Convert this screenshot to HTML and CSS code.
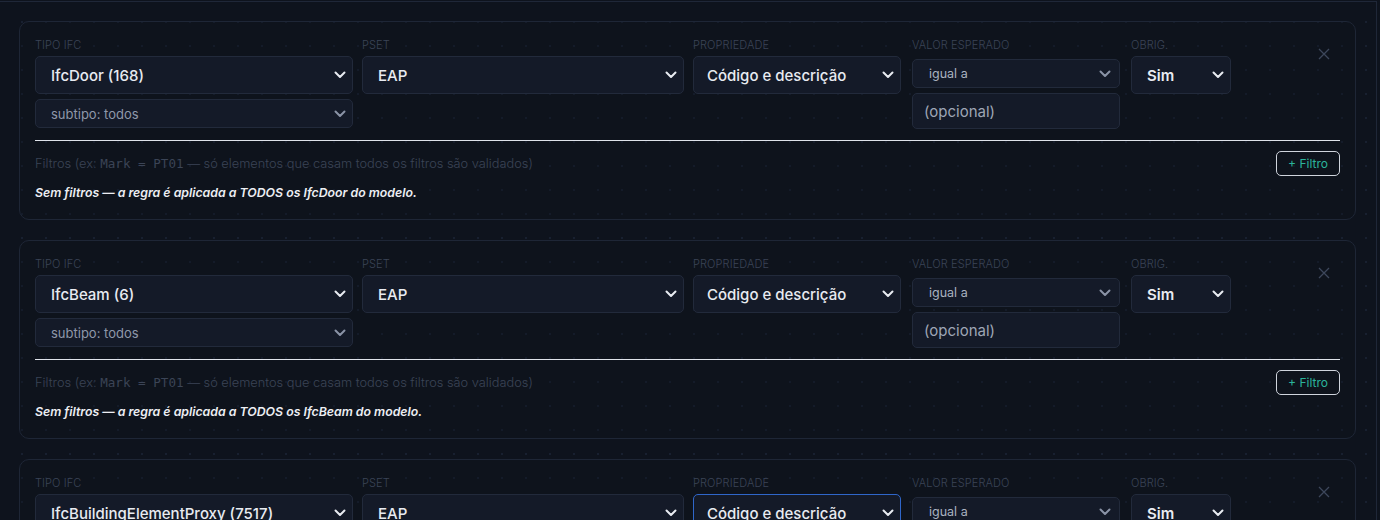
FILE: index.html
```html
<!DOCTYPE html>
<html lang="pt-BR">
<head>
<meta charset="utf-8">
<title>Regras IFC</title>
<link rel="stylesheet" href="styles.css">
</head>
<body>
<div class="panel">

  <div class="rule-card">
    <div class="rule-grid">
      <div class="field">
        <span class="lbl">Tipo IFC</span>
        <div class="sel sel-lg"><span>IfcDoor (168)</span><svg class="chev" width="12" height="8" viewBox="0 0 12 8"><path d="M1.5 1.5 6 6l4.5-4.5" fill="none" stroke="currentColor" stroke-width="2" stroke-linecap="round" stroke-linejoin="round"/></svg></div>
        <div class="sel sel-sm"><span>subtipo: todos</span><svg class="chev" width="12" height="8" viewBox="0 0 12 8"><path d="M1.5 1.5 6 6l4.5-4.5" fill="none" stroke="currentColor" stroke-width="2" stroke-linecap="round" stroke-linejoin="round"/></svg></div>
      </div>
      <div class="field">
        <span class="lbl">Pset</span>
        <div class="sel sel-lg"><span>EAP</span><svg class="chev" width="12" height="8" viewBox="0 0 12 8"><path d="M1.5 1.5 6 6l4.5-4.5" fill="none" stroke="currentColor" stroke-width="2" stroke-linecap="round" stroke-linejoin="round"/></svg></div>
      </div>
      <div class="field">
        <span class="lbl">Propriedade</span>
        <div class="sel sel-lg sel-prop"><span>Código e descrição</span><svg class="chev" width="12" height="8" viewBox="0 0 12 8"><path d="M1.5 1.5 6 6l4.5-4.5" fill="none" stroke="currentColor" stroke-width="2" stroke-linecap="round" stroke-linejoin="round"/></svg></div>
      </div>
      <div class="field">
        <span class="lbl">Valor esperado</span>
        <div class="sel sel-op"><span>igual a</span><svg class="chev" width="12" height="8" viewBox="0 0 12 8"><path d="M1.5 1.5 6 6l4.5-4.5" fill="none" stroke="currentColor" stroke-width="2" stroke-linecap="round" stroke-linejoin="round"/></svg></div>
        <div class="inp">(opcional)</div>
      </div>
      <div class="field">
        <span class="lbl">Obrig.</span>
        <div class="sel sel-lg sel-bold"><span>Sim</span><svg class="chev" width="12" height="8" viewBox="0 0 12 8"><path d="M1.5 1.5 6 6l4.5-4.5" fill="none" stroke="currentColor" stroke-width="2" stroke-linecap="round" stroke-linejoin="round"/></svg></div>
      </div>
      <button class="remove" aria-label="Remover"><svg width="12" height="12" viewBox="0 0 12 12"><path d="M1 1l10 10M11 1 1 11" fill="none" stroke="currentColor" stroke-width="1.3"/></svg></button>
    </div>
    <hr class="divider">
    <div class="filters-head">
      <span class="hint">Filtros (ex: <code>Mark = PT01</code> — só elementos que casam todos os filtros são validados)</span>
      <button class="add-filter">+ Filtro</button>
    </div>
    <p class="no-filters">Sem filtros — a regra é aplicada a TODOS os IfcDoor do modelo.</p>
  </div>

  <div class="rule-card">
    <div class="rule-grid">
      <div class="field">
        <span class="lbl">Tipo IFC</span>
        <div class="sel sel-lg"><span>IfcBeam (6)</span><svg class="chev" width="12" height="8" viewBox="0 0 12 8"><path d="M1.5 1.5 6 6l4.5-4.5" fill="none" stroke="currentColor" stroke-width="2" stroke-linecap="round" stroke-linejoin="round"/></svg></div>
        <div class="sel sel-sm"><span>subtipo: todos</span><svg class="chev" width="12" height="8" viewBox="0 0 12 8"><path d="M1.5 1.5 6 6l4.5-4.5" fill="none" stroke="currentColor" stroke-width="2" stroke-linecap="round" stroke-linejoin="round"/></svg></div>
      </div>
      <div class="field">
        <span class="lbl">Pset</span>
        <div class="sel sel-lg"><span>EAP</span><svg class="chev" width="12" height="8" viewBox="0 0 12 8"><path d="M1.5 1.5 6 6l4.5-4.5" fill="none" stroke="currentColor" stroke-width="2" stroke-linecap="round" stroke-linejoin="round"/></svg></div>
      </div>
      <div class="field">
        <span class="lbl">Propriedade</span>
        <div class="sel sel-lg sel-prop"><span>Código e descrição</span><svg class="chev" width="12" height="8" viewBox="0 0 12 8"><path d="M1.5 1.5 6 6l4.5-4.5" fill="none" stroke="currentColor" stroke-width="2" stroke-linecap="round" stroke-linejoin="round"/></svg></div>
      </div>
      <div class="field">
        <span class="lbl">Valor esperado</span>
        <div class="sel sel-op"><span>igual a</span><svg class="chev" width="12" height="8" viewBox="0 0 12 8"><path d="M1.5 1.5 6 6l4.5-4.5" fill="none" stroke="currentColor" stroke-width="2" stroke-linecap="round" stroke-linejoin="round"/></svg></div>
        <div class="inp">(opcional)</div>
      </div>
      <div class="field">
        <span class="lbl">Obrig.</span>
        <div class="sel sel-lg sel-bold"><span>Sim</span><svg class="chev" width="12" height="8" viewBox="0 0 12 8"><path d="M1.5 1.5 6 6l4.5-4.5" fill="none" stroke="currentColor" stroke-width="2" stroke-linecap="round" stroke-linejoin="round"/></svg></div>
      </div>
      <button class="remove" aria-label="Remover"><svg width="12" height="12" viewBox="0 0 12 12"><path d="M1 1l10 10M11 1 1 11" fill="none" stroke="currentColor" stroke-width="1.3"/></svg></button>
    </div>
    <hr class="divider">
    <div class="filters-head">
      <span class="hint">Filtros (ex: <code>Mark = PT01</code> — só elementos que casam todos os filtros são validados)</span>
      <button class="add-filter">+ Filtro</button>
    </div>
    <p class="no-filters">Sem filtros — a regra é aplicada a TODOS os IfcBeam do modelo.</p>
  </div>

  <div class="rule-card">
    <div class="rule-grid">
      <div class="field">
        <span class="lbl">Tipo IFC</span>
        <div class="sel sel-lg"><span>IfcBuildingElementProxy (7517)</span><svg class="chev" width="12" height="8" viewBox="0 0 12 8"><path d="M1.5 1.5 6 6l4.5-4.5" fill="none" stroke="currentColor" stroke-width="2" stroke-linecap="round" stroke-linejoin="round"/></svg></div>
        <div class="sel sel-sm"><span>subtipo: todos</span><svg class="chev" width="12" height="8" viewBox="0 0 12 8"><path d="M1.5 1.5 6 6l4.5-4.5" fill="none" stroke="currentColor" stroke-width="2" stroke-linecap="round" stroke-linejoin="round"/></svg></div>
      </div>
      <div class="field">
        <span class="lbl">Pset</span>
        <div class="sel sel-lg"><span>EAP</span><svg class="chev" width="12" height="8" viewBox="0 0 12 8"><path d="M1.5 1.5 6 6l4.5-4.5" fill="none" stroke="currentColor" stroke-width="2" stroke-linecap="round" stroke-linejoin="round"/></svg></div>
      </div>
      <div class="field">
        <span class="lbl">Propriedade</span>
        <div class="sel sel-lg sel-prop is-focused"><span>Código e descrição</span><svg class="chev" width="12" height="8" viewBox="0 0 12 8"><path d="M1.5 1.5 6 6l4.5-4.5" fill="none" stroke="currentColor" stroke-width="2" stroke-linecap="round" stroke-linejoin="round"/></svg></div>
      </div>
      <div class="field">
        <span class="lbl">Valor esperado</span>
        <div class="sel sel-op"><span>igual a</span><svg class="chev" width="12" height="8" viewBox="0 0 12 8"><path d="M1.5 1.5 6 6l4.5-4.5" fill="none" stroke="currentColor" stroke-width="2" stroke-linecap="round" stroke-linejoin="round"/></svg></div>
        <div class="inp">(opcional)</div>
      </div>
      <div class="field">
        <span class="lbl">Obrig.</span>
        <div class="sel sel-lg sel-bold"><span>Sim</span><svg class="chev" width="12" height="8" viewBox="0 0 12 8"><path d="M1.5 1.5 6 6l4.5-4.5" fill="none" stroke="currentColor" stroke-width="2" stroke-linecap="round" stroke-linejoin="round"/></svg></div>
      </div>
      <button class="remove" aria-label="Remover"><svg width="12" height="12" viewBox="0 0 12 12"><path d="M1 1l10 10M11 1 1 11" fill="none" stroke="currentColor" stroke-width="1.3"/></svg></button>
    </div>
    <hr class="divider">
    <div class="filters-head">
      <span class="hint">Filtros (ex: <code>Mark = PT01</code> — só elementos que casam todos os filtros são validados)</span>
      <button class="add-filter">+ Filtro</button>
    </div>
    <p class="no-filters">Sem filtros — a regra é aplicada a TODOS os IfcBuildingElementProxy do modelo.</p>
  </div>

</div>
</body>
</html>
```

FILE: styles.css
```css
html, body {
  margin: 0;
  height: 100%;
  overflow: hidden;
}

body {
  background-color: #0e131d;
  background-image: radial-gradient(circle, #182030 1px, transparent 1.4px);
  background-size: 24px 24px;
  background-position: 10px 10px;
  font-family: Inter, "Noto Sans", sans-serif;
  color: #e6e9ef;
}

.panel {
  box-sizing: border-box;
  width: 1377px;
  margin-top: 1px;
  border-top: 1px solid #1f2738;
  border-right: 1px solid #1f2738;
  padding: 19px 20px 0 19px;
  min-height: 600px;
}

.rule-card {
  border: 1px solid #1e2636;
  border-radius: 10px;
  padding: 16px 15px 18px 15px;
  margin-bottom: 20px;
  background: rgba(14, 19, 29, 0.35);
}

.rule-grid {
  display: grid;
  grid-template-columns: 318px 322px 210px 208px 102px 1fr;
  column-gap: 9px;
  align-items: start;
}

.rule-grid > .field:nth-child(5) { margin-left: 2px; }

.field {
  display: flex;
  flex-direction: column;
  gap: 5px;
}

.lbl {
  font-size: 11px;
  line-height: 14px;
  font-weight: 300;
  text-transform: uppercase;
  color: #3b4457;
  letter-spacing: 0.01em;
  margin-bottom: -1px;
}

.sel {
  box-sizing: border-box;
  display: flex;
  align-items: center;
  justify-content: space-between;
  background: #141a28;
  border: 1px solid #222a3b;
  border-radius: 5px;
  padding: 0 6px 0 15px;
  white-space: nowrap;
}

.sel-lg {
  height: 38px;
  font-size: 15px;
  font-weight: 500;
  color: #e8ebf1;
}

.sel-prop {
  width: 208px;
  padding-left: 13px;
}

.sel-bold {
  font-weight: 600;
}

.is-focused {
  border-color: #2f66c9;
}

.sel-sm {
  height: 29px;
  font-size: 13px;
  color: #8f98aa;
}

.sel-op {
  margin-top: 3px;
  height: 29px;
  font-size: 12.5px;
  color: #aab2c0;
  padding-left: 16px;
  padding-right: 8px;
}

.sel-sm .chev,
.sel-op .chev {
  color: #8a93a6;
}

.chev {
  flex: none;
  display: block;
}

.inp {
  box-sizing: border-box;
  height: 36px;
  display: flex;
  align-items: center;
  padding-left: 11px;
  background: #141a28;
  border: 1px solid #222a3b;
  border-radius: 5px;
  font-size: 15px;
  color: #9ea6b6;
}

.remove {
  justify-self: end;
  margin: 4px 4px 0 0;
  width: 24px;
  height: 24px;
  display: flex;
  align-items: center;
  justify-content: center;
  padding: 0;
  background: none;
  border: 0;
  color: #3d475b;
}

.remove svg { display: block; }

.divider {
  margin: 11px 0 0 0;
  border: 0;
  border-top: 1px solid #dfe3ea;
  height: 0;
}

.filters-head {
  margin-top: 10px;
  display: flex;
  align-items: center;
  justify-content: space-between;
  line-height: 16px;
}

.hint {
  font-size: 12.8px;
  font-weight: 300;
  color: #3b4456;
}

.hint code {
  font-family: "DejaVu Sans Mono", "Liberation Mono", monospace;
  font-size: 12.6px;
}

.add-filter {
  box-sizing: border-box;
  height: 25px;
  width: 64px;
  padding: 0;
  background: transparent;
  border: 1px solid #cfd4dc;
  border-radius: 5px;
  font-family: Inter, "Noto Sans", sans-serif;
  font-size: 12px;
  color: #2bb39b;
}

.no-filters {
  margin: 9px 0 0 0;
  font-size: 12.3px;
  line-height: 16px;
  font-style: italic;
  font-weight: 600;
  color: #eceef3;
}
```
